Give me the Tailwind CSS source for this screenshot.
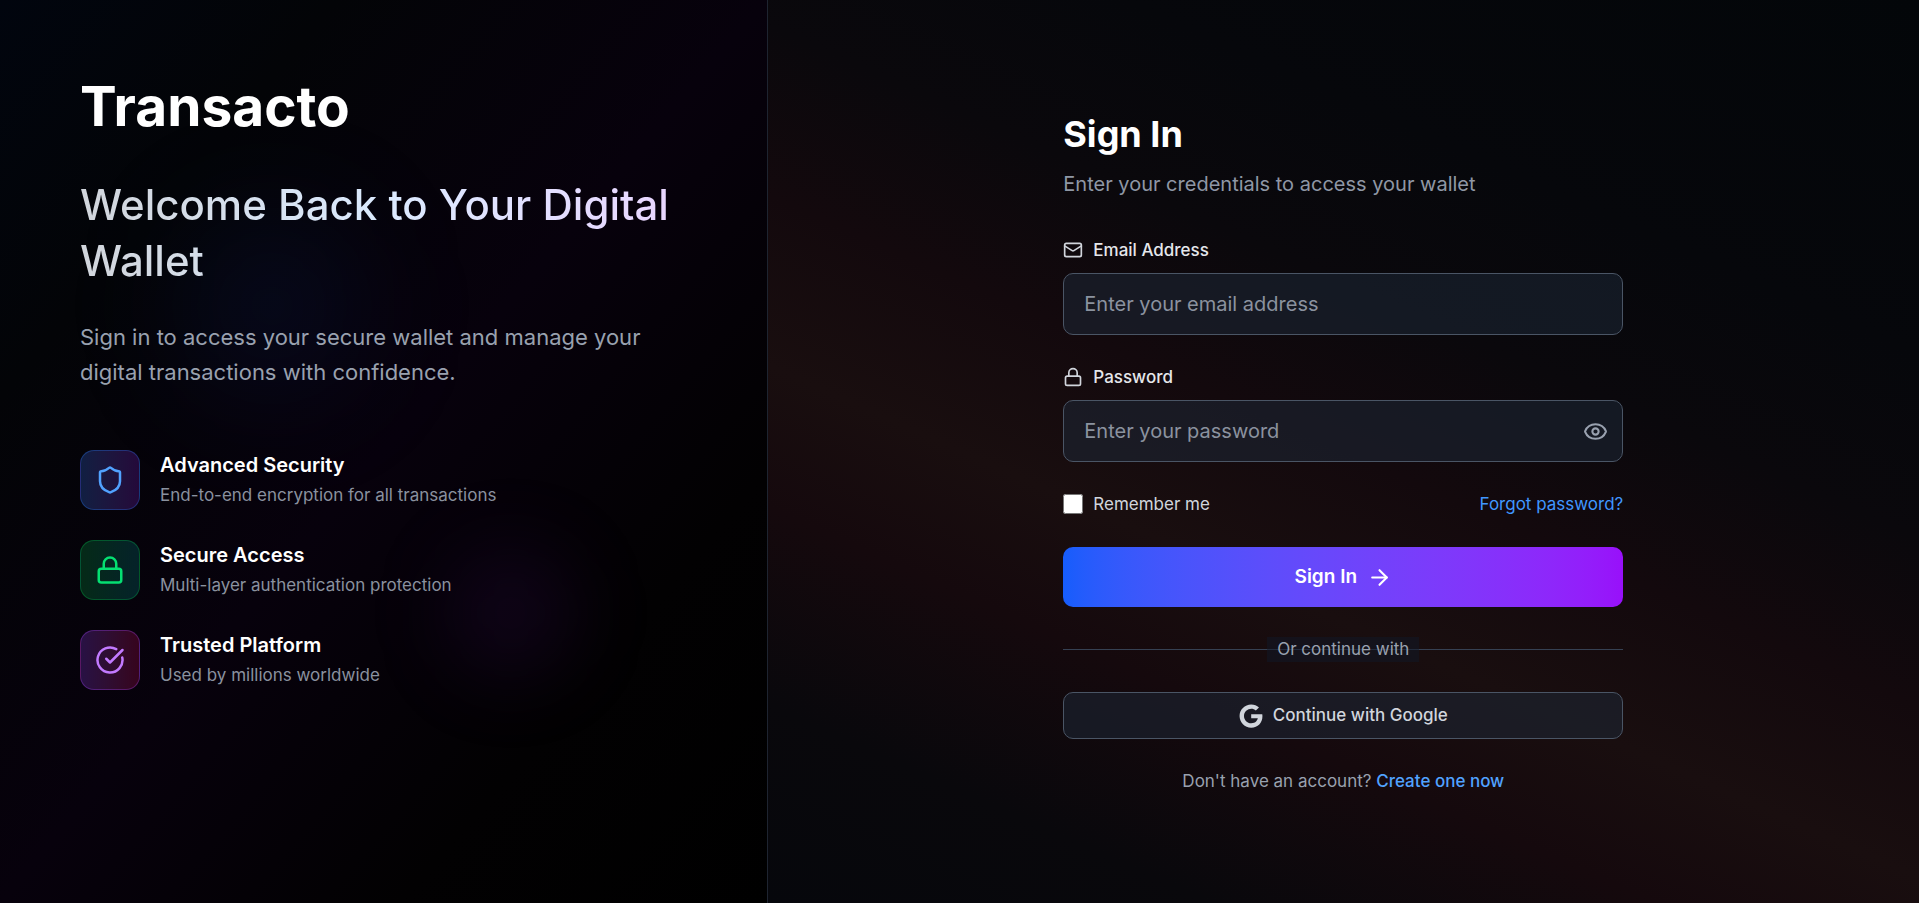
<!DOCTYPE html>
<html lang="en">
<head>
<meta charset="utf-8">
<meta name="viewport" content="width=device-width, initial-scale=1">
<title>Transacto – Sign In</title>
<script src="https://cdn.jsdelivr.net/npm/@tailwindcss/browser@4"></script>
</head>
<body class="bg-black font-['Inter',sans-serif] text-white">
<div class="flex min-h-screen flex-col lg:flex-row">

  <!-- Brand panel -->
  <section class="relative overflow-hidden border-r border-[#1e2430] bg-[linear-gradient(to_bottom_right,#01050e_0%,#030407_22%,#07010c_50%,#020102_76%,#000000_100%)] px-20 py-[70px] lg:w-2/5">
    <div class="absolute left-1/4 top-1/4 size-40 rounded-full bg-[#1e40af]/15 blur-3xl"></div>
    <div class="absolute bottom-1/4 right-1/4 size-32 rounded-full bg-[#6b21a8]/12 blur-2xl"></div>

    <div class="relative">
      <p class="text-[55px] font-bold leading-[72px]">Transacto</p>
      <h1 class="mt-[35px] bg-linear-to-r from-gray-300 via-blue-100 to-purple-200 bg-clip-text text-[42px] font-medium leading-[56px] text-transparent">Welcome Back to Your Digital Wallet</h1>
      <p class="mt-[31px] text-[22px] leading-[35px] text-[#99a1af]">Sign in to access your secure wallet and manage your digital transactions with confidence.</p>

      <ul class="mt-[60px] flex flex-col gap-[30px]">
        <li class="flex items-center gap-5">
          <div class="flex size-[60px] items-center justify-center rounded-[14px] border border-blue-500/30 bg-linear-to-r from-[#101f42] to-[#24093a]">
            <svg class="size-[30px] text-[#51a2ff]" viewBox="0 0 24 24" fill="none" stroke="currentColor" stroke-width="2" stroke-linecap="round" stroke-linejoin="round"><path d="M20 13c0 5-3.500 7.500-7.660 8.950a1 1 0 0 1-.67-.01C7.500 20.500 4 18 4 13V6a1 1 0 0 1 1-1c2 0 4.500-1.200 6.240-2.720a1.170 1.170 0 0 1 1.520 0C14.510 3.810 17 5 19 5a1 1 0 0 1 1 1z"/></svg>
          </div>
          <div>
            <h2 class="text-[20px] font-semibold leading-[30px]">Advanced Security</h2>
            <p class="text-[17px] leading-[30px] text-[#8a919f]">End-to-end encryption for all transactions</p>
          </div>
        </li>
        <li class="flex items-center gap-5">
          <div class="flex size-[60px] items-center justify-center rounded-[14px] border border-green-500/30 bg-linear-to-r from-[#052a17] to-[#052229]">
            <svg class="size-[30px] text-[#05df72]" viewBox="0 0 24 24" fill="none" stroke="currentColor" stroke-width="2" stroke-linecap="round" stroke-linejoin="round"><rect x="3" y="11" width="18" height="11" rx="2"/><path d="M7 11V7a5 5 0 0 1 10 0v4"/></svg>
          </div>
          <div>
            <h2 class="text-[20px] font-semibold leading-[30px]">Secure Access</h2>
            <p class="text-[17px] leading-[30px] text-[#8a919f]">Multi-layer authentication protection</p>
          </div>
        </li>
        <li class="flex items-center gap-5">
          <div class="flex size-[60px] items-center justify-center rounded-[14px] border border-purple-500/30 bg-linear-to-r from-[#281144] to-[#36041d]">
            <svg class="size-[30px] text-[#c27aff]" viewBox="0 0 24 24" fill="none" stroke="currentColor" stroke-width="2" stroke-linecap="round" stroke-linejoin="round"><path d="M21.801 10A10 10 0 1 1 17 3.335"/><path d="m9 11 3 3L22 4"/></svg>
          </div>
          <div>
            <h2 class="text-[20px] font-semibold leading-[30px]">Trusted Platform</h2>
            <p class="text-[17px] leading-[30px] text-[#8a919f]">Used by millions worldwide</p>
          </div>
        </li>
      </ul>
    </div>
  </section>

  <!-- Sign-in panel -->
  <main class="flex flex-1 items-center justify-center bg-[linear-gradient(204deg,#030609_0%,#06070b_25%,#0a080c_38%,#13090d_50%,#190e0f_62%,#15090d_72%,#09080c_86%,#06070c_100%)] px-6 py-10">
    <div class="w-full max-w-[560px]">
      <h2 class="text-[36px] font-bold leading-[50px]">Sign In</h2>
      <p class="mt-[10px] text-[20px] leading-[30px] text-[#8f97a5]">Enter your credentials to access your wallet</p>

      <form class="mt-[38px]">
        <label for="email" class="flex items-center gap-[10px] text-[17px] font-medium leading-[26px] text-gray-200">
          <svg class="size-5 text-gray-300" viewBox="0 0 24 24" fill="none" stroke="currentColor" stroke-width="2" stroke-linecap="round" stroke-linejoin="round"><rect x="2" y="4" width="20" height="16" rx="2"/><path d="m22 7-8.970 5.700a1.940 1.940 0 0 1-2.060 0L2 7"/></svg>
          Email Address
        </label>
        <input id="email" type="email" placeholder="Enter your email address" class="mt-[10px] block h-[62px] w-full rounded-[10px] border border-[#4a5565] bg-[#1e2939]/50 px-5 text-[20px] text-white placeholder:text-[#8b929f]">

        <label for="password" class="mt-[29px] flex items-center gap-[10px] text-[17px] font-medium leading-[26px] text-gray-200">
          <svg class="size-5 text-gray-300" viewBox="0 0 24 24" fill="none" stroke="currentColor" stroke-width="2" stroke-linecap="round" stroke-linejoin="round"><rect x="3" y="11" width="18" height="11" rx="2"/><path d="M7 11V7a5 5 0 0 1 10 0v4"/></svg>
          Password
        </label>
        <div class="relative mt-[10px]">
          <input id="password" type="password" placeholder="Enter your password" class="block h-[62px] w-full rounded-[10px] border border-[#4a5565] bg-[#1e2939]/50 pl-5 pr-14 text-[20px] text-white placeholder:text-[#8b929f]">
          <button type="button" aria-label="Show password" class="absolute inset-y-0 right-[15px] flex items-center text-[#99a1af]">
            <svg class="size-[25px]" viewBox="0 0 24 24" fill="none" stroke="currentColor" stroke-width="2" stroke-linecap="round" stroke-linejoin="round"><path d="M2.062 12.348a1 1 0 0 1 0-.696 10.750 10.750 0 0 1 19.876 0 1 1 0 0 1 0 .696 10.750 10.750 0 0 1-19.876 0"/><circle cx="12" cy="12" r="3"/></svg>
          </button>
        </div>

        <div class="mt-[29px] flex items-center justify-between text-[17px] leading-[26px]">
          <label for="remember" class="flex items-center gap-[10px] text-gray-300">
            <input id="remember" type="checkbox" class="size-5">
            Remember me
          </label>
          <a href="#" class="text-[#4097ff]">Forgot password?</a>
        </div>

        <button type="submit" class="mt-[30px] flex h-[60px] w-full items-center justify-center gap-[10px] rounded-[10px] bg-linear-to-r from-blue-600 to-purple-600 text-[19px] font-semibold">
          Sign In
          <svg class="size-[25px]" viewBox="0 0 24 24" fill="none" stroke="currentColor" stroke-width="2" stroke-linecap="round" stroke-linejoin="round"><path d="M5 12h14"/><path d="m12 5 7 7-7 7"/></svg>
        </button>

        <div class="mt-[30px] grid items-center justify-items-center">
          <div class="col-start-1 row-start-1 h-px w-full bg-[#364153]"></div>
          <span class="col-start-1 row-start-1 bg-[#101828]/50 px-[10px] text-[17px] leading-[25px] text-[#99a1af]">Or continue with</span>
        </div>

        <button type="button" class="mt-[30px] flex h-[47px] w-full items-center justify-center gap-[10px] rounded-[10px] border border-[#4a5565] bg-[#1e2939]/50 text-[17px] font-medium text-gray-300">
          <svg class="size-6" viewBox="0 0 488 512" fill="currentColor"><path d="M488 261.800C488 403.300 391.100 504 248 504 110.800 504 0 393.200 0 256S110.800 8 248 8c66.800 0 123 24.500 166.300 64.900l-67.500 64.900C258.500 52.600 94.300 116.600 94.300 256c0 86.500 69.100 156.600 153.700 156.600 98.200 0 135-70.400 140.800-106.900H248v-85.300h236.100c2.300 12.700 3.900 24.900 3.900 41.400z"/></svg>
          Continue with Google
        </button>

        <p class="mt-[29px] text-center text-[17px] leading-[26px] text-[#99a1af]">Don't have an account? <a href="#" class="font-medium text-[#51a2ff]">Create one now</a></p>
      </form>
    </div>
  </main>
</div>
</body>
</html>
